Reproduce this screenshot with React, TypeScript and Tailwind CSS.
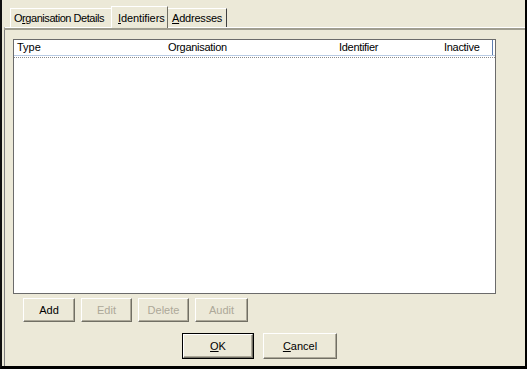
import React from "react";

const font = { fontFamily: '"Liberation Sans", Arial, sans-serif' };

function Btn({
  children,
  disabled,
  w,
}: {
  children: React.ReactNode;
  disabled?: boolean;
  w: string;
}) {
  return (
    <div
      className={`${w} h-[24px] flex items-center justify-center border border-t-white border-l-white border-b-[#716f64] border-r-[#716f64] shadow-[inset_-1px_-1px_0_#aca899] text-[11px] ${
        disabled ? "text-[#aca899]" : "text-black"
      }`}
    >
      {children}
    </div>
  );
}

export default function App() {
  return (
    <div
      className="w-[527px] h-[369px] bg-[#ECE9D8] border-l-2 border-l-[#101010] border-r-2 border-r-black border-b-[3px] border-b-black flex flex-col text-black overflow-hidden"
      style={font}
    >
      {/* Tabs */}
      <div className="h-[27px] flex items-end pl-[8px] shrink-0">
        <div className="h-[19px] w-[101px] flex items-center pl-[3px] border-t border-l border-t-white border-l-white text-[11px] tracking-[-0.45px]">
          O<span className="underline">r</span>ganisation Details
        </div>
        <div className="h-[22px] w-[57px] flex items-start pt-[3px] pl-[6px] border-t border-l border-r border-t-white border-l-white border-r-[#716f64] text-[11px] bg-[#ECE9D8] relative top-[1px] tracking-[-0.1px]">
          <span className="underline">I</span>dentifiers
        </div>
        <div className="h-[19px] w-[59px] flex items-center pl-[4px] border-t border-r border-t-white border-r-[#404040] text-[11px] tracking-[-0.2px]">
          <span className="underline">A</span>ddresses
        </div>
      </div>

      {/* Panel */}
      <div className="flex-1 flex flex-col border-t border-t-white ml-[2px] border-l border-l-[#808080]">
        <div className="h-[2px] bg-[#a09e90] -ml-[1px]" />
        {/* List */}
        <div className="ml-[8px] mt-[9px] w-[483px] h-[255px] bg-white border border-[#6b6b6b] flex flex-col">
          <div className="h-[16px] flex items-center text-[11px] border-b border-b-[#b8cbe4] relative">
            <div className="w-[150px] pl-[3px]">Type</div>
            <div className="w-[171px] pl-[4px] tracking-[-0.3px]">Organisation</div>
            <div className="w-[105px] pl-[4px] tracking-[-0.3px]">Identifier</div>
            <div className="w-[53px] pl-[4px] tracking-[-0.3px] border-r border-r-[#5f7fb0] h-full flex items-center">
              Inactive
            </div>
          </div>
          <div className="mt-[1px] h-[1px] border-t border-dotted border-t-[#8a8a8a]" />
        </div>

        {/* Buttons row */}
        <div className="flex gap-[6px] ml-[18px] mt-[4px]">
          <Btn w="w-[52px]">Add</Btn>
          <Btn w="w-[51px]" disabled>
            Edit
          </Btn>
          <Btn w="w-[51px]" disabled>
            Delete
          </Btn>
          <Btn w="w-[53px]" disabled>
            Audit
          </Btn>
        </div>

        {/* OK / Cancel */}
        <div className="flex gap-[9px] ml-[177px] mt-[11px]">
          <div className="w-[72px] h-[26px] border border-black flex">
            <div className="flex-1 flex items-center justify-center border border-t-white border-l-white border-b-[#716f64] border-r-[#716f64] shadow-[inset_-1px_-1px_0_#aca899] text-[11px]">
              <span className="underline">O</span>K
            </div>
          </div>
          <div className="w-[74px] h-[26px] flex items-center justify-center border border-t-white border-l-white border-b-[#716f64] border-r-[#716f64] shadow-[inset_-1px_-1px_0_#aca899] text-[11px]">
            <span className="underline">C</span>ancel
          </div>
        </div>
      </div>
    </div>
  );
}
